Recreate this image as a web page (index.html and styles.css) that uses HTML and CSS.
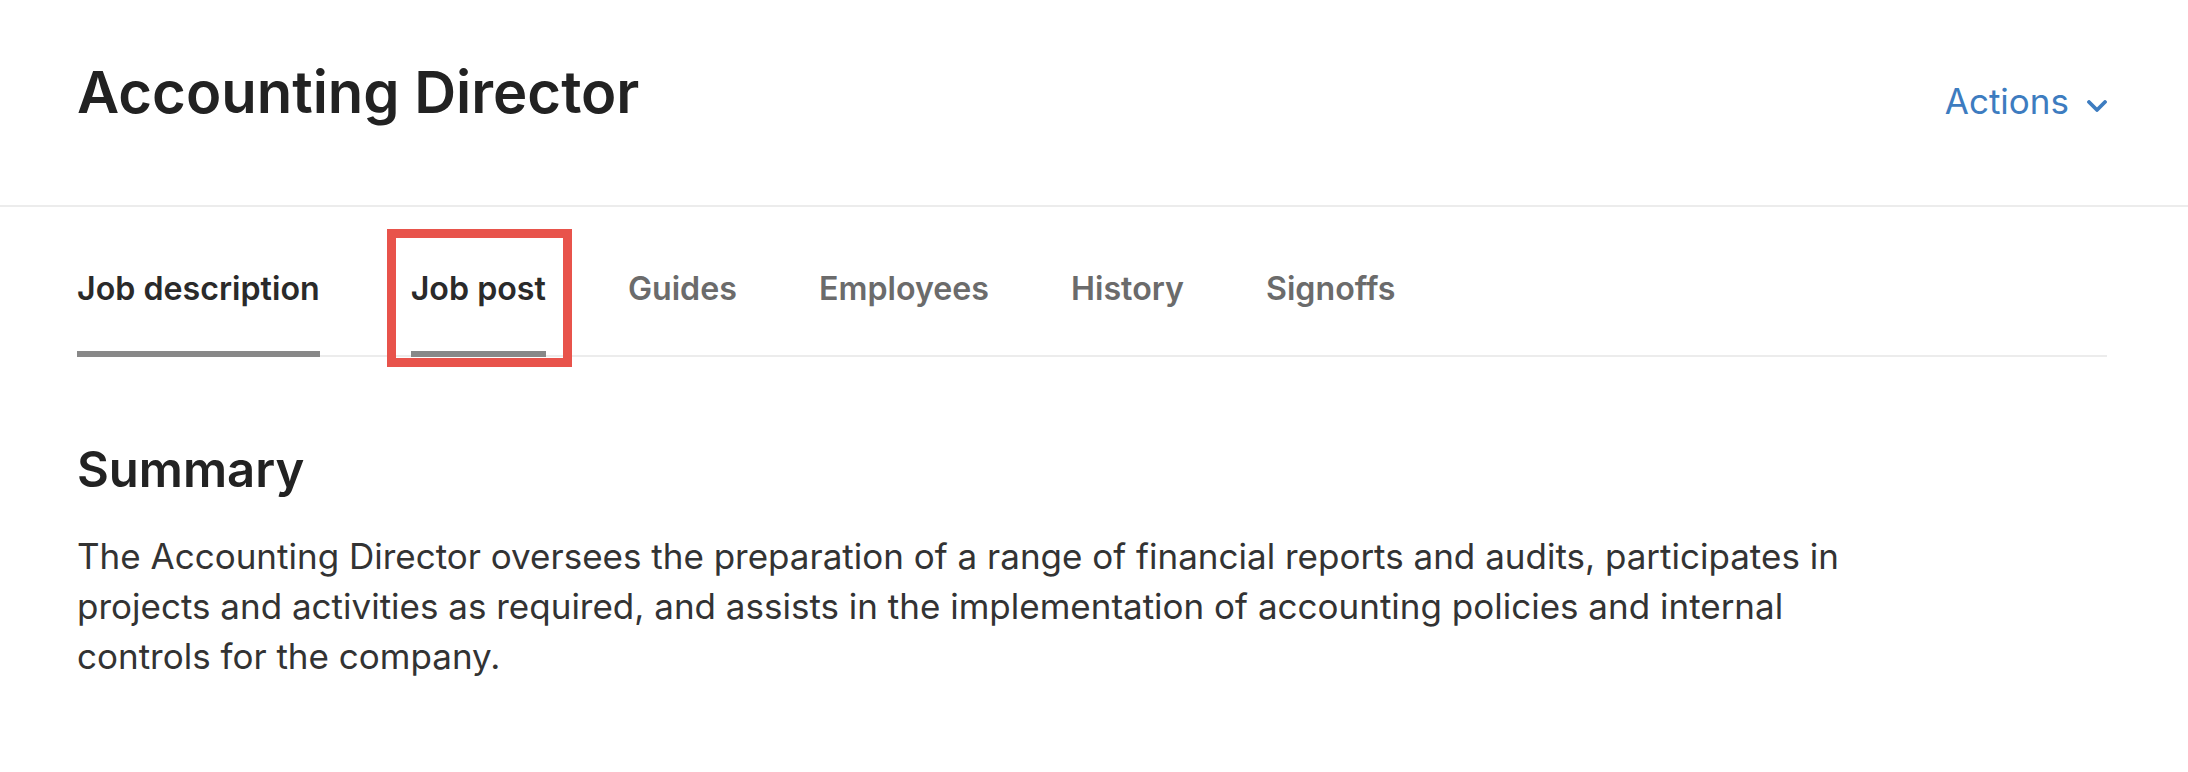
FILE: index.html
```html
<!DOCTYPE html>
<html lang="en">
<head>
    <meta charset="utf-8">
    <title>Accounting Director</title>
    <link rel="stylesheet" href="styles.css">
</head>
<body>
    <header class="page-header">
        <h1 class="page-title">Accounting Director</h1>
        <button class="actions" type="button">
            Actions
            <svg class="chevron" width="20" height="12" viewBox="0 0 20 12">
                <polyline points="2,2 10,10 18,2" fill="none" stroke="currentColor" stroke-width="3.8" stroke-linecap="round" stroke-linejoin="round"/>
            </svg>
        </button>
    </header>

    <div class="content">
        <nav class="tabs">
            <a class="tab tab-active tab-first" href="#">Job description</a>
            <a class="tab tab-active tab-marked" href="#">Job post</a>
            <a class="tab" href="#">Guides</a>
            <a class="tab" href="#">Employees</a>
            <a class="tab" href="#">History</a>
            <a class="tab" href="#">Signoffs</a>
        </nav>

        <section class="summary">
            <h2>Summary</h2>
            <p>The Accounting Director oversees the preparation of a range of financial reports and audits, participates in projects and activities as required, and assists in the implementation of accounting policies and internal controls for the company.</p>
        </section>
    </div>
</body>
</html>
```

FILE: styles.css
```css
body {
    margin: 0;
    background-color: #fff;
    font-family: Inter, "Noto Sans", sans-serif;
    color: #222;
}

.page-header {
    display: flex;
    justify-content: space-between;
    align-items: flex-start;
    padding: 58px 81px 0 77px;
    height: 147px;
    border-bottom: 2px solid #ececec;
}

.page-title {
    margin: 0;
    font-size: 58px;
    font-weight: 600;
    line-height: 1.2;
    color: #222;
}

.actions {
    display: flex;
    align-items: center;
    gap: 18px;
    margin-top: 22px;
    padding: 0;
    border: none;
    background: none;
    font-family: inherit;
    font-size: 35px;
    line-height: 1.2;
    color: #3d7cc0;
    cursor: pointer;
}

.chevron {
    margin-top: 9px;
}

.content {
    padding: 0 81px 0 77px;
}

.tabs {
    display: flex;
    gap: 82px;
    padding-top: 63px;
    border-bottom: 2px solid #ececec;
}

.tab {
    position: relative;
    margin-bottom: -2px;
    padding-bottom: 44px;
    border-bottom: 6px solid transparent;
    font-size: 32.2px;
    font-weight: 600;
    line-height: 37px;
    color: #6b6b6b;
    text-decoration: none;
}

.tab-first {
    margin-right: 9px;
}

.tab-active {
    color: #2a2a2a;
    border-bottom-color: #888;
}

.tab-marked::after {
    content: "";
    position: absolute;
    top: -41px;
    left: -24px;
    right: -26px;
    bottom: -16px;
    border: 9px solid #e8534b;
}

.summary {
    padding-top: 84px;
}

.summary h2 {
    margin: 0;
    font-size: 49px;
    font-weight: 600;
    line-height: 1.2;
    color: #222;
}

.summary p {
    max-width: 1790px;
    margin: 31px 0 0;
    font-size: 35px;
    line-height: 50px;
    color: #333;
}
```
